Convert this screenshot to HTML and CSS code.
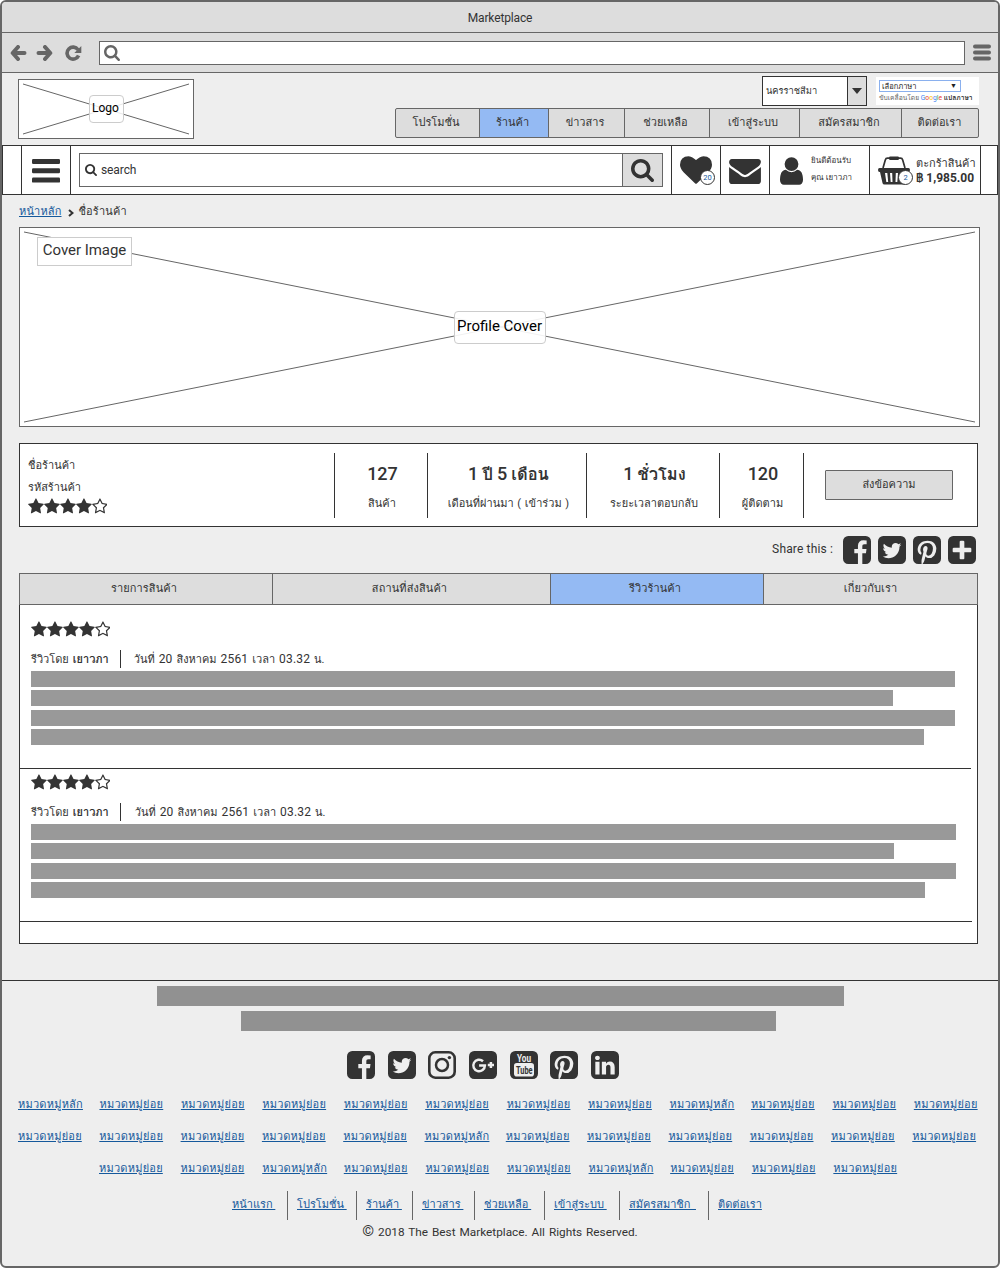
FILE: index.html
```html
<!DOCTYPE html>
<html lang="th">
<head>
<meta charset="utf-8">
<title>Marketplace</title>
<link rel="stylesheet" href="styles.css">
</head>
<body>
<svg class="defs" aria-hidden="true">
<symbol id="star" viewBox="64 0 1664 1792"><path d="M1728 647q0 22-26 48l-363 354 86 500q1 7 1 20 0 21-10.500 35.500t-30.500 14.500q-19 0-40-12l-449-236-449 236q-22 12-40 12-21 0-31.500-14.500t-10.500-35.500q0-6 2-20l86-500-364-354q-25-27-25-48 0-37 56-46l502-73 225-455q19-41 49-41t49 41l225 455 502 73q56 9 56 46z"/></symbol>
<symbol id="star-o" viewBox="64 0 1664 1792"><path d="M1201 1004l306-297-422-62-189-382-189 382-422 62 306 297-73 421 378-199 377 199zm527-357q0 22-26 48l-363 354 86 500q1 7 1 20 0 50-41 50-19 0-40-12l-449-236-449 236q-22 12-40 12-21 0-31.500-14.500t-10.500-35.500q0-6 2-20l86-500-364-354q-25-27-25-48 0-37 56-46l502-73 225-455q19-41 49-41t49 41l225 455 502 73q56 9 56 46z"/></symbol>
<symbol id="search" viewBox="64 128 1664 1664"><path d="M1216 832q0-185-131.500-316.500t-316.500-131.500-316.500 131.500-131.500 316.500 131.500 316.500 316.500 131.500 316.500-131.500 131.500-316.500zm512 832q0 52-38 90t-90 38q-54 0-90-38l-343-342q-179 124-399 124-143 0-273.500-55.500t-225-150-150-225-55.500-273.500 55.500-273.500 150-225 225-150 273.500-55.500 273.500 55.500 225 150 150 225 55.500 273.500q0 220-124 399l343 343q37 37 37 90z"/></symbol>
<symbol id="bars" viewBox="0 0 28 24"><rect width="28" height="5" rx="1.200"/><rect y="9.300" width="28" height="5" rx="1.200"/><rect y="18.600" width="28" height="5" rx="1.200"/></symbol>
<symbol id="heart" viewBox="0 128 1792 1536"><path d="M896 1664q-26 0-44-18l-624-602q-10-8-27.500-26t-55.500-65.500-68-97.500-53.500-121-23.500-138q0-220 127-344t351-124q62 0 126.500 21.500t120 58 95.500 68.500 76 68q36-36 76-68t95.500-68.500 120-58 126.500-21.500q224 0 351 124t127 344q0 221-229 450l-623 600q-18 18-44 18z"/></symbol>
<symbol id="mail" viewBox="0 256 1792 1408"><path d="M1792 710v794q0 66-47 113t-113 47h-1472q-66 0-113-47t-47-113v-794q44 49 101 87 362 246 497 345 57 42 92.500 65.500t94.500 48 110 24.500h2q51 0 110-24.500t94.500-48 92.500-65.500q170-123 498-345 57-39 100-87zm0-294q0 79-49 151t-122 123q-376 261-468 325-10 7-42.500 30.500t-54 38-52 32.500-57.500 27-50 9h-2q-23 0-50-9t-57.500-27-52-32.500-54-38-42.500-30.500q-91-64-262-182.500t-205-142.500q-62-42-117-115.500t-55-136.500q0-78 41.500-130t118.500-52h1472q65 0 112.500 47t47.500 113z"/></symbol>
<symbol id="user" viewBox="256 128 1280 1536"><path d="M1536 1399q0 109-62.500 187t-150.500 78h-854q-88 0-150.500-78t-62.500-187q0-85 8.500-160.500t31.500-152 58.500-131 94-89 134.500-34.500q131 128 313 128t313-128q76 0 134.500 34.500t94 89 58.500 131 31.500 152 8.500 160.500zm-256-887q0 159-112.500 271.500t-271.500 112.500-271.500-112.500-112.500-271.500 112.500-271.500 271.500-112.500 271.500 112.500 112.500 271.500z"/></symbol>
<symbol id="basket" viewBox="0 0 32 29"><path d="M5 12L7.300 4Q7.800 2.200 9.500 2.200H22.500Q24.200 2.200 24.700 4L27 12" fill="none" stroke="currentColor" stroke-width="1.700"/><rect x="11" y="0.500" width="10" height="3.400" rx="1.200"/><path fill-rule="evenodd" d="M1.500 12H30.500Q32 12 32 14T30.500 16H30L27.500 27Q27.200 28.500 25.500 28.500H6.500Q4.800 28.500 4.500 27L2 16H1.500Q0 16 0 14T1.500 12ZM7 17L8.300 26H10.200L9.300 17ZM12 17L12.700 26H14.500L14.200 17ZM17.800 17L17.500 26H19.300L20 17ZM22.700 17L21.800 26H23.700L25 17Z"/></symbol>
<symbol id="facebook" viewBox="128 128 1536 1536"><path d="M1376 128q119 0 203.500 84.500t84.500 203.500v960q0 119-84.500 203.500t-203.500 84.500h-188v-595h199l30-232h-229v-148q0-56 23.500-84t91.500-28l122-1v-207q-63-9-178-9-136 0-217.500 80t-81.500 226v171h-200v232h200v595h-532q-119 0-203.500-84.500t-84.500-203.500v-960q0-119 84.500-203.500t203.500-84.500h960z"/></symbol>
<symbol id="twitter" viewBox="128 128 1536 1536"><path d="M1408 610q-56 25-121 34 68-40 93-117-65 38-134 51-61-66-153-66-87 0-148.500 61.500t-61.500 148.500q0 29 5 48-129-7-242-65t-192-155q-29 50-29 106 0 114 91 175-47-1-100-26v2q0 75 50 133.500t123 72.500q-29 8-51 8-13 0-39-4 21 63 74.500 104t121.500 42q-116 90-261 90-26 0-50-3 148 94 322 94 112 0 210-35.500t168-95 120.500-137 75-162 24.500-168.500q0-18-1-27 63-45 105-109zm256-194v960q0 119-84.500 203.500t-203.500 84.500h-960q-119 0-203.500-84.500t-84.500-203.500v-960q0-119 84.500-203.500t203.500-84.500h960q119 0 203.500 84.500t84.500 203.500z"/></symbol>
<symbol id="pinterest" viewBox="128 128 1536 1536"><path d="M1376 128q119 0 203.500 84.500t84.500 203.500v960q0 119-84.500 203.500t-203.500 84.500h-725q85-122 108-210 9-34 53-209 21 39 73.500 67t112.500 28q181 0 295.500-147.500t114.500-373.500q0-84-35-162.500t-96.500-139-152.500-97-197-36.500q-104 0-194.500 28.500t-153 76.500-107.500 109.500-66.500 128-21.500 132.500q0 102 39.500 180t116.500 110q13 5 23.500 0t14.500-19q10-44 15-61 6-23-11-42-50-62-50-150 0-150 103.500-256.500t270.500-106.500q149 0 232.500 81t83.500 210q0 168-67.500 286t-173.500 118q-60 0-97-43.500t-23-103.500q8-34 26.500-92.500t29.500-102 11-74.500q0-49-26.500-81.500t-75.500-32.500q-61 0-103.500 56.500t-42.500 139.500q0 72 24 121l-98 414q-24 100-7 254h-183q-119 0-203.500-84.500t-84.500-203.500v-960q0-119 84.500-203.500t203.500-84.500h960z"/></symbol>
<symbol id="plus" viewBox="128 128 1536 1536"><path d="M1408 960v-128q0-26-19-45t-45-19h-320v-320q0-26-19-45t-45-19h-128q-26 0-45 19t-19 45v320h-320q-26 0-45 19t-19 45v128q0 26 19 45t45 19h320v320q0 26 19 45t45 19h128q26 0 45-19t19-45v-320h320q26 0 45-19t19-45zm256-544v960q0 119-84.500 203.500t-203.500 84.500h-960q-119 0-203.500-84.500t-84.500-203.500v-960q0-119 84.500-203.500t203.500-84.500h960q119 0 203.500 84.500t84.500 203.500z"/></symbol>
<symbol id="linkedin" viewBox="128 128 1536 1536"><path d="M365 1414h231v-694h-231v694zm246-908q-1-52-36-86t-93-34-94.500 34-36.500 86q0 51 35.500 85.500t92.500 34.500h1q59 0 95-34.500t36-85.500zm585 908h231v-398q0-154-73-233t-193-79q-136 0-209 117h2v-101h-231q3 66 0 694h231v-388q0-38 7-56 15-35 45-59.500t74-24.500q116 0 116 157v371zm468-998v960q0 119-84.500 203.500t-203.500 84.500h-960q-119 0-203.500-84.500t-84.500-203.500v-960q0-119 84.500-203.500t203.500-84.500h960q119 0 203.500 84.500t84.500 203.500z"/></symbol>
<symbol id="instagram" viewBox="0 0 28 28"><rect x="1.300" y="1.300" width="25.400" height="25.400" rx="6" fill="none" stroke="currentColor" stroke-width="2.600"/><circle cx="14" cy="14" r="6" fill="none" stroke="currentColor" stroke-width="2.500"/><circle cx="21.400" cy="6.600" r="1.700"/></symbol>
<symbol id="gplus" viewBox="0 0 28 28"><rect width="28" height="28" rx="5.200"/><path d="M14 10.200A5.800 5.800 0 1 0 15.900 14.600H10.100M18.800 14H25M21.900 10.900V17.100" fill="none" stroke="#eee" stroke-width="2.500"/></symbol>
<symbol id="back" viewBox="0 0 17 16"><path d="M8 2L2.700 8L8 14M3 8H14.500" fill="none" stroke="currentColor" stroke-width="4" stroke-linecap="round" stroke-linejoin="round"/></symbol>
<symbol id="reload" viewBox="0 0 17 16"><path d="M13 4.700A6 6 0 1 0 13.600 10.500" fill="none" stroke="currentColor" stroke-width="3.600"/><path d="M16.300 1V8H9.300Z"/></symbol>
</svg>

<div class="window">
  <div class="titlebar">Marketplace</div>
  <div class="toolbar">
    <svg class="tb-icon"><use href="#back"/></svg>
    <svg class="tb-icon forward"><use href="#back"/></svg>
    <svg class="tb-icon reload"><use href="#reload"/></svg>
    <div class="address"><svg><use href="#search"/></svg></div>
    <svg class="tb-menu" viewBox="0 0 18 16"><path d="M2 2H16M2 8H16M2 14H16"/></svg>
  </div>

  <header class="site-head">
    <div class="logo">
      <svg class="cross" viewBox="0 0 174 58" preserveAspectRatio="none"><path d="M4 4L170 54M4 54L170 4"/></svg>
      <span class="logo-label">Logo</span>
    </div>
    <div class="head-right">
      <div class="pickers">
        <div class="province"><span>นครราชสีมา</span><i><svg viewBox="0 0 10 6"><path d="M0 0H10L5 6Z"/></svg></i></div>
        <div class="translate"><div class="lang"><span>เลือกภาษา</span><b>▼</b></div><p>ขับเคลื่อนโดย <span class="google"><i>G</i><i>o</i><i>o</i><i>g</i><i>l</i><i>e</i></span> <b>แปลภาษา</b></p></div>
      </div>
      <nav class="topnav"><a>โปรโมชั่น</a><a class="on">ร้านค้า</a><a>ข่าวสาร</a><a>ช่วยเหลือ</a><a>เข้าสู่ระบบ</a><a>สมัครสมาชิก</a><a>ติดต่อเรา</a></nav>
    </div>
  </header>

  <div class="mainbar">
    <div class="cell edge"></div>
    <div class="cell menu"><svg><use href="#bars"/></svg></div>
    <div class="cell find"><div class="field"><svg><use href="#search"/></svg><span>search</span></div><div class="go"><svg><use href="#search"/></svg></div></div>
    <div class="cell likes"><svg><use href="#heart"/></svg><span class="badge">20</span></div>
    <div class="cell mail"><svg><use href="#mail"/></svg></div>
    <div class="cell account"><svg><use href="#user"/></svg><div><p>ยินดีต้อนรับ</p><p>คุณ เยาวภา</p></div></div>
    <div class="cell cart"><svg><use href="#basket"/></svg><span class="badge">2</span><div><p>ตะกร้าสินค้า</p><b>฿ 1,985.00</b></div></div>
    <div class="cell last"></div>
  </div>

  <main>
    <div class="crumbs"><a>หน้าหลัก</a><svg viewBox="0 0 6 8"><path d="M1 1L4.500 4L1 7"/></svg><span>ชื่อร้านค้า</span></div>
    <div class="cover">
      <svg class="cross" viewBox="0 0 959 198" preserveAspectRatio="none"><path d="M4 4L955 194M4 194L955 4"/></svg>
      <span class="cover-tag">Cover Image</span>
      <span class="cover-label">Profile Cover</span>
    </div>

    <section class="shop">
      <div class="ident"><p>ชื่อร้านค้า</p><p>รหัสร้านค้า</p><div class="stars"><svg><use href="#star"/></svg><svg><use href="#star"/></svg><svg><use href="#star"/></svg><svg><use href="#star"/></svg><svg><use href="#star-o"/></svg></div></div>
      <div class="stat s1"><b><i>127</i></b><span>สินค้า</span></div>
      <div class="stat s2"><b><i>1</i> ปี <i>5</i> เดือน</b><span>เดือนที่ผ่านมา ( เข้าร่วม )</span></div>
      <div class="stat s3"><b><i>1</i> ชั่วโมง</b><span>ระยะเวลาตอบกลับ</span></div>
      <div class="stat s4"><b><i>120</i></b><span>ผู้ติดตาม</span></div>
      <div class="contact"><button>ส่งข้อความ</button></div>
    </section>

    <div class="share"><span>Share this :</span><svg><use href="#facebook"/></svg><svg><use href="#twitter"/></svg><svg><use href="#pinterest"/></svg><svg><use href="#plus"/></svg></div>

    <nav class="tabs"><a>รายการสินค้า</a><a>สถานที่ส่งสินค้า</a><a class="on">รีวิวร้านค้า</a><a>เกี่ยวกับเรา</a></nav>
    <section class="reviews">
      <article class="review">
        <div class="stars"><svg><use href="#star"/></svg><svg><use href="#star"/></svg><svg><use href="#star"/></svg><svg><use href="#star"/></svg><svg><use href="#star-o"/></svg></div>
        <div class="meta"><span class="by">รีวิวโดย</span><b>เยาวภา</b><time>วันที่ <i>20</i> สิงหาคม <i>2561</i> เวลา <i>03.32</i> น.</time></div>
        <div class="line"></div><div class="line l2"></div><div class="line"></div><div class="line l4"></div>
      </article>
      <article class="review second">
        <div class="stars"><svg><use href="#star"/></svg><svg><use href="#star"/></svg><svg><use href="#star"/></svg><svg><use href="#star"/></svg><svg><use href="#star-o"/></svg></div>
        <div class="meta"><span class="by">รีวิวโดย</span><b>เยาวภา</b><time>วันที่ <i>20</i> สิงหาคม <i>2561</i> เวลา <i>03.32</i> น.</time></div>
        <div class="line"></div><div class="line l2"></div><div class="line"></div><div class="line l4"></div>
      </article>
    </section>
  </main>

  <footer>
    <div class="bar b1"></div>
    <div class="bar b2"></div>
    <div class="social"><svg><use href="#facebook"/></svg><svg><use href="#twitter"/></svg><svg><use href="#instagram"/></svg><svg><use href="#gplus"/></svg><svg class="yt" viewBox="0 0 28 28"><rect width="28" height="28" rx="5.200"/><rect x="4" y="12" width="20" height="13.500" rx="2.800" fill="#eee"/><text x="7" y="10.800" textLength="14" lengthAdjust="spacingAndGlyphs" class="yt-you">You</text><text x="6" y="22.800" textLength="16.500" lengthAdjust="spacingAndGlyphs" class="yt-tube">Tube</text></svg><svg><use href="#pinterest"/></svg><svg><use href="#linkedin"/></svg></div>
    <div class="cats"><a class="m">หมวดหมู่หลัก</a><a>หมวดหมู่ย่อย</a><a>หมวดหมู่ย่อย</a><a>หมวดหมู่ย่อย</a><a>หมวดหมู่ย่อย</a><a>หมวดหมู่ย่อย</a><a>หมวดหมู่ย่อย</a><a>หมวดหมู่ย่อย</a><a class="m">หมวดหมู่หลัก</a><a>หมวดหมู่ย่อย</a><a>หมวดหมู่ย่อย</a><a>หมวดหมู่ย่อย</a></div>
    <div class="cats r2"><a>หมวดหมู่ย่อย</a><a>หมวดหมู่ย่อย</a><a>หมวดหมู่ย่อย</a><a>หมวดหมู่ย่อย</a><a>หมวดหมู่ย่อย</a><a class="m">หมวดหมู่หลัก</a><a>หมวดหมู่ย่อย</a><a>หมวดหมู่ย่อย</a><a>หมวดหมู่ย่อย</a><a>หมวดหมู่ย่อย</a><a>หมวดหมู่ย่อย</a><a>หมวดหมู่ย่อย</a></div>
    <div class="cats r3"><a>หมวดหมู่ย่อย</a><a>หมวดหมู่ย่อย</a><a class="m">หมวดหมู่หลัก</a><a>หมวดหมู่ย่อย</a><a>หมวดหมู่ย่อย</a><a>หมวดหมู่ย่อย</a><a class="m">หมวดหมู่หลัก</a><a>หมวดหมู่ย่อย</a><a>หมวดหมู่ย่อย</a><a>หมวดหมู่ย่อย</a></div>
    <nav class="links"><span><a>หน้าแรก&nbsp;</a></span><span><a>โปรโมชั่น&nbsp;</a></span><span><a>ร้านค้า&nbsp;</a></span><span><a>ข่าวสาร&nbsp;</a></span><span><a>ช่วยเหลือ&nbsp;</a></span><span><a>เข้าสู่ระบบ&nbsp;</a></span><span><a>สมัครสมาชิก&nbsp;&nbsp;</a></span><span><a>ติดต่อเรา</a></span></nav>
    <p class="copy"><span>©</span> 2018 The Best Marketplace. All Rights Reserved.</p>
  </footer>
</div>
</body>
</html>
```
FILE: styles.css
```css
* { box-sizing: border-box; margin: 0; padding: 0; }
body { background: #fff; font-family: Roboto, Loma, "Noto Sans", sans-serif; font-size: 11px; line-height: 16px; color: #333; white-space: nowrap; }
svg { fill: currentColor; display: block; flex: none; }
i { font-style: normal; }
.defs { position: absolute; width: 0; height: 0; }
.window { width: 1000px; height: 1268px; border: 2px solid #666; border-radius: 6px; background: #eee; overflow: hidden; }

.titlebar { height: 31px; line-height: 32px; text-align: center; background: #ddd; border-bottom: 1px solid #666; font-size: 12px; letter-spacing: -.15px; }
.toolbar { height: 40px; background: #ddd; border-bottom: 1px solid #666; display: flex; align-items: center; padding-left: 8px; color: #666; }
.tb-icon { width: 17px; height: 16px; margin-right: 9px; }
.forward { transform: scaleX(-1); margin-right: 12px; }
.reload { margin-right: 17px; }
.address { width: 866px; height: 24px; border: 1px solid #666; background: #fff; padding: 3px 4px; }
.address svg { width: 16px; height: 16px; }
.tb-menu { width: 18px; height: 17px; margin-left: 8px; }
.tb-menu path { stroke: #666; stroke-width: 4; stroke-linecap: round; }

.site-head { height: 72px; display: flex; justify-content: space-between; padding: 6px 19px 0 16px; }
.logo { width: 176px; height: 60px; border: 1px solid #666; background: #fff; display: grid; place-items: center; }
.logo > *, .cover > * { grid-area: 1 / 1; }
.cross { width: 100%; height: 100%; }
.cross path { stroke: #666; fill: none; vector-effect: non-scaling-stroke; }
.logo-label { width: 35px; height: 28px; line-height: 25px; border: 1px solid #ccc; border-radius: 4px; background: rgba(255,255,255,.85); color: #000; font-size: 12px; text-align: center; padding-right: 1px; }
.head-right { display: flex; flex-direction: column; align-items: flex-end; margin-top: -3px; }
.pickers { display: flex; gap: 9px; height: 32px; }
.province { width: 105px; height: 30px; border: 1px solid #333; background: #fff; display: flex; justify-content: space-between; line-height: 27px; padding-left: 3px; font-size: 9.300px; }
.province i { width: 19px; background: #ddd; border-left: 1px solid #333; display: grid; place-items: center; }
.province svg { width: 10px; height: 6px; }
.translate { width: 103px; height: 28px; margin-top: 1px; background: #fff; padding: 3px; font-size: 7.500px; line-height: 9px; color: #222; }
.translate p { font-size: 6.700px; line-height: 13px; color: #666; }
.translate p > b { color: #333; }
.lang { width: 82px; height: 12px; border: 1px solid #8ab0ee; display: flex; justify-content: space-between; padding: 1px 3px 0 2px; }
.lang b { font-size: 7px; }
.google i:nth-child(1), .google i:nth-child(4) { color: #4285f4; }
.google i:nth-child(2), .google i:nth-child(6) { color: #ea4335; }
.google i:nth-child(3) { color: #fbbc05; }
.google i:nth-child(5) { color: #34a853; }
.topnav { display: grid; grid-template-columns: 83px 69px 76px 85px 90px 102px 77px; height: 30px; border: 1px solid #666; border-radius: 2px; background: #ddd; }
.topnav a, .tabs a { text-align: center; line-height: 28px; border-left: 1px solid #666; padding-right: 3px; }
.topnav a:first-child, .tabs a:first-child { border-left: 0; }
.topnav a:last-child { padding-right: 1px; }
.on { background: #94baf3; }

.mainbar { height: 50px; border-top: 1px solid #333; border-bottom: 1px solid #333; background: #fff; display: grid; grid-template-columns: 19px 49px 601px 49px 49px 100px 111px 18px; }
.cell { border-left: 1px solid #333; display: flex; align-items: center; position: relative; }
.last { border-right: 1px solid #333; }
.menu { justify-content: center; }
.menu svg { width: 28px; height: 24px; margin-top: 2px; }
.find { padding-left: 8px; }
.field { width: 544px; height: 34px; border: 1px solid #666; display: flex; align-items: center; padding-left: 5px; gap: 4px; font-size: 12px; letter-spacing: -.1px; }
.field svg { width: 12px; height: 12px; }
.go { width: 40px; height: 34px; border: 1px solid #666; border-left: 0; background: #ddd; display: grid; place-items: center; }
.go svg { width: 23px; height: 23px; }
.likes svg { width: 32px; height: 28px; margin-left: 8px; }
.badge { position: absolute; left: 28px; top: 24px; width: 15px; height: 15px; border: 1px solid #333; border-radius: 50%; background: #fff; font-size: 7.500px; line-height: 14px; text-align: center; color: #15599c; }
.mail svg { width: 32px; height: 25px; margin: 2px 0 0 8px; }
.account svg { width: 23px; height: 28px; margin: 1px 0 0 10px; }
.account div { margin-left: 8px; font-size: 8px; line-height: 17px; margin-top: -2px; }
.cart svg { width: 32px; height: 29px; margin-left: 8px; }
.cart div { margin: 2px 0 0 6px; line-height: 15px; }
.cart b { font-size: 12px; }

main { padding: 0 20px 0 17px; }
.crumbs { display: flex; align-items: center; height: 32px; padding-top: 2px; letter-spacing: .15px; }
.crumbs svg { width: 6px; height: 8px; margin: 1px 5px 0 6px; }
.crumbs path { fill: none; stroke: #333; stroke-width: 2; }
a { color: inherit; }
.crumbs a, footer a { color: #15599c; text-decoration: underline; }
.cover { width: 961px; height: 200px; border: 1px solid #666; background: #fff; display: grid; place-items: center; }
.cover-tag { justify-self: start; align-self: start; margin: 9px 0 0 17px; width: 95px; height: 29px; line-height: 25px; border: 1px solid #ccc; background: #fff; font-size: 15px; text-align: center; letter-spacing: -.05px; }
.cover-label { width: 92px; height: 33px; line-height: 29px; border: 1px solid #ccc; border-radius: 4px; background: rgba(255,255,255,.9); color: #000; font-size: 15px; text-align: center; }
.shop { margin-top: 16px; width: 959px; height: 84px; border: 1px solid #333; background: #fff; display: grid; grid-template-columns: 314px 93px 159px 133px 84px 1fr; padding: 9px 0 8px; }
.ident { padding: 2px 0 0 8px; line-height: 22px; }
.stars { display: flex; height: 17px; }
.ident .stars { margin-top: -1px; }
.stars svg { width: 15.900px; height: 17px; }
.stat { border-left: 1px solid #333; text-align: center; display: flex; flex-direction: column; padding: 10px 0 0 3px; }
.stat b { font-size: 16.500px; line-height: 22px; }
.stat i { font-size: 18px; font-weight: 500; }
.stat span { margin-top: 10px; line-height: 16px; word-spacing: 1px; }
.s1 span, .s3 span, .s4 span { padding-right: 1px; }
.contact { border-left: 1px solid #333; padding: 17px 0 0 21px; }
button { width: 128px; height: 30px; border: 1px solid #666; border-radius: 1px; background: #ddd; font: inherit; color: inherit; display: block; }
.share { height: 45px; margin-bottom: 1px; display: flex; justify-content: flex-end; align-items: center; gap: 7px; padding-right: 3px; margin-right: -1px; }
.share svg, .social svg { width: 28px; height: 28px; }
.share span { margin: -1px 3px 0 0; font-size: 12px; letter-spacing: .15px; }
.tabs { width: 959px; height: 32px; display: grid; grid-template-columns: 252px 278px 213px 214px; border: 1px solid #666; background: #ddd; letter-spacing: .1px; }
.tabs a { line-height: 30px; padding-right: 4px; }
.tabs a:last-child { padding-right: 0; }
.reviews { width: 959px; height: 339px; border: 1px solid #333; border-top: 0; background: #fff; }
.review { width: 951px; height: 164px; border-bottom: 1px solid #333; padding: 16px 0 0 11px; }
.second { width: 952px; height: 153px; padding-top: 5px; }
.meta { display: flex; height: 18px; margin: 12px 0 3px; line-height: 19px; }
.meta b { margin-left: 4px; width: 48px; border-right: 1px solid #333; }
.meta time { margin-left: 13px; word-spacing: 1.200px; line-height: 18px; }
.second time { margin-left: 14px; }
.meta i { font-size: 12px; letter-spacing: .2px; }
.line { width: 924px; height: 16px; background: #999; margin-bottom: 3.330px; }
.second .line { width: 925px; }
.line.l2 { width: 862px; }
.line.l4 { width: 893px; }
.second .line.l2 { width: 863px; }
.second .line.l4 { width: 894px; }

footer { margin-top: 36px; border-top: 1px solid #333; padding: 5px 0 0; }
.bar { height: 20px; background: #919191; margin-bottom: 5px; }
.b1 { width: 687px; margin-left: 155px; }
.b2 { width: 535px; margin-left: 239px; }
.social { display: flex; gap: 12.700px; margin: 20px 0 0 345px; height: 28px; }
.yt { overflow: visible; }
.yt-you, .yt-tube { font: bold 11.500px Roboto, sans-serif; fill: #eee; }
.yt-tube { fill: #333; }
.cats { display: grid; grid-template-columns: repeat(12, 81.450px); margin-left: 16px; letter-spacing: .22px; padding-top: 18px; box-sizing: content-box; height: 14px; }
.cats.r2 { grid-template-columns: repeat(12, 81.300px); }
.cats.r3 { grid-template-columns: repeat(10, 81.600px); margin-left: 97px; }
.links { display: grid; grid-template-columns: 66px 69px 56px 62px 70px 75px 89px 80px; margin: 16px 0 0 219px; line-height: 27px; height: 29px; }
.links span { padding: 0 9px; border-left: 1px solid #666; }
.links span:first-child { border: 0; padding-left: 11px; }
.copy { text-align: center; font-size: 11.800px; word-spacing: 1px; margin-top: 1px; line-height: 20px; }
.copy span { font-size: 15px; }
```
